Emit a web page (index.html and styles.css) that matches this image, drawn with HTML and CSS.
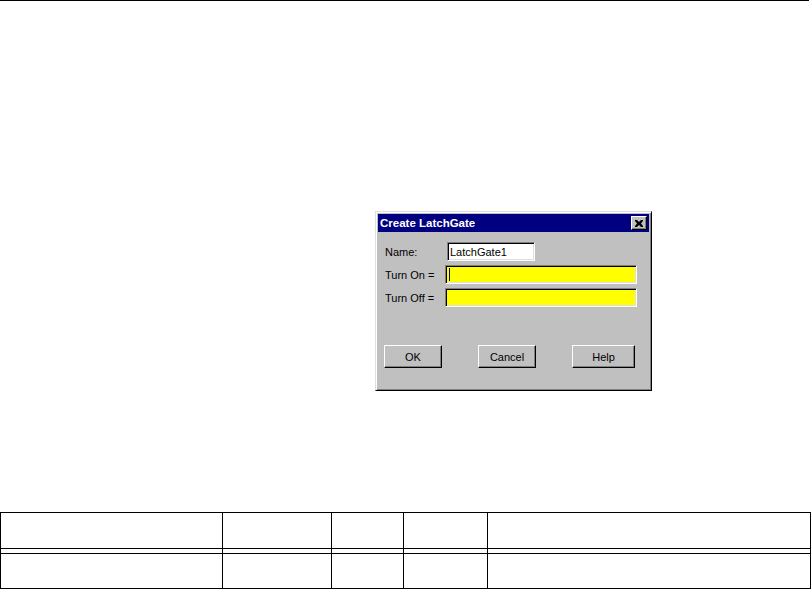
FILE: index.html
```html
<!DOCTYPE html>
<html lang="en">
<head>
  <meta charset="UTF-8" />
  <title>Create LatchGate</title>
  <link rel="stylesheet" href="styles.css">
</head>
<body>
  <div class="rule"></div>

  <div class="stage">
    <div class="dialog">
      <div class="titlebar">
        <span>Create LatchGate</span>
        <span class="close">
          <svg width="8" height="7" viewBox="0 0 8 7">
            <path d="M0 0h2l2 2 2-2h2v1L6 3.5 8 6v1H6L4 5 2 7H0V6l2-2.5L0 1z" fill="#000"/>
          </svg>
        </span>
      </div>

      <div class="content">
        <div class="form">
          <span class="label">Name:</span>
          <div class="field name">LatchGate1</div>
          <span class="label">Turn On =</span>
          <div class="field formula"><span class="caret"></span></div>
          <span class="label">Turn Off =</span>
          <div class="field formula"></div>
        </div>

        <div class="buttons">
          <button type="button" class="btn">OK</button>
          <button type="button" class="btn">Cancel</button>
          <button type="button" class="btn wide">Help</button>
        </div>
      </div>
    </div>
  </div>

  <table class="grid">
    <colgroup>
      <col style="width:222px">
      <col style="width:109px">
      <col style="width:72px">
      <col style="width:84px">
      <col style="width:323px">
    </colgroup>
    <tr class="head"><td></td><td></td><td></td><td></td><td></td></tr>
    <tr class="gap"><td></td><td></td><td></td><td></td><td></td></tr>
    <tr class="row"><td></td><td></td><td></td><td></td><td></td></tr>
  </table>
</body>
</html>
```

FILE: styles.css
```css
body {
  margin: 0;
  background: #fff;
  font-family: "Liberation Sans", Arial, sans-serif;
  font-size: 11px;
  color: #000;
}

.rule {
  width: 809px;
  height: 1px;
  background: #000;
}

.stage {
  padding: 210px 0 0 375px;
}

.dialog {
  box-sizing: border-box;
  width: 277px;
  height: 180px;
  padding: 2px;
  background: #c0c0c0;
  border: 1px solid;
  border-color: #dfdfdf #000 #000 #dfdfdf;
  box-shadow: inset 1px 1px #fff, inset -1px -1px #808080;
}

.titlebar {
  display: flex;
  align-items: center;
  justify-content: space-between;
  height: 18px;
  padding: 0 2px 0 2px;
  background: #000080;
  color: #fff;
  font-weight: bold;
  font-size: 11.5px;
}

.close {
  box-sizing: border-box;
  width: 16px;
  height: 14px;
  display: flex;
  align-items: center;
  justify-content: center;
  background: #c0c0c0;
  border: 1px solid;
  border-color: #fff #000 #000 #fff;
  box-shadow: inset -1px -1px #808080;
}

.content {
  padding: 10px 0 0 4px;
}

.form {
  display: grid;
  grid-template-columns: 63px 192px;
  grid-auto-rows: 19px;
  row-gap: 4px;
  align-items: center;
}

.label {
  padding-left: 3px;
}

.field {
  box-sizing: border-box;
  height: 19px;
  display: flex;
  align-items: center;
  padding-left: 2px;
  border: 1px solid;
  border-color: #808080 #fff #fff #808080;
  box-shadow: inset 1px 1px #000, inset -1px -1px #dfdfdf;
}

.name {
  width: 88px;
  margin-left: 2px;
  background: #fff;
}

.formula {
  width: 192px;
  background: #ffff00;
}

.caret {
  width: 1px;
  height: 13px;
  margin-left: 1px;
  background: #000080;
}

.buttons {
  display: flex;
  gap: 36px;
  margin-top: 38px;
  padding-left: 2px;
}

.btn {
  box-sizing: border-box;
  width: 58px;
  height: 23px;
  padding: 0;
  background: #c0c0c0;
  border: 1px solid;
  border-color: #fff #000 #000 #fff;
  box-shadow: inset -1px -1px #808080;
  font-family: "Liberation Sans", Arial, sans-serif;
  font-size: 11px;
  color: #000;
}

.btn.wide {
  width: 63px;
}

.grid {
  margin-top: 121px;
  width: 810px;
  table-layout: fixed;
  border-collapse: collapse;
}

.grid td {
  padding: 0;
  border: 1px solid #000;
}

.head td {
  height: 35px;
}

.gap td {
  height: 4px;
}

.row td {
  height: 34px;
}
```
